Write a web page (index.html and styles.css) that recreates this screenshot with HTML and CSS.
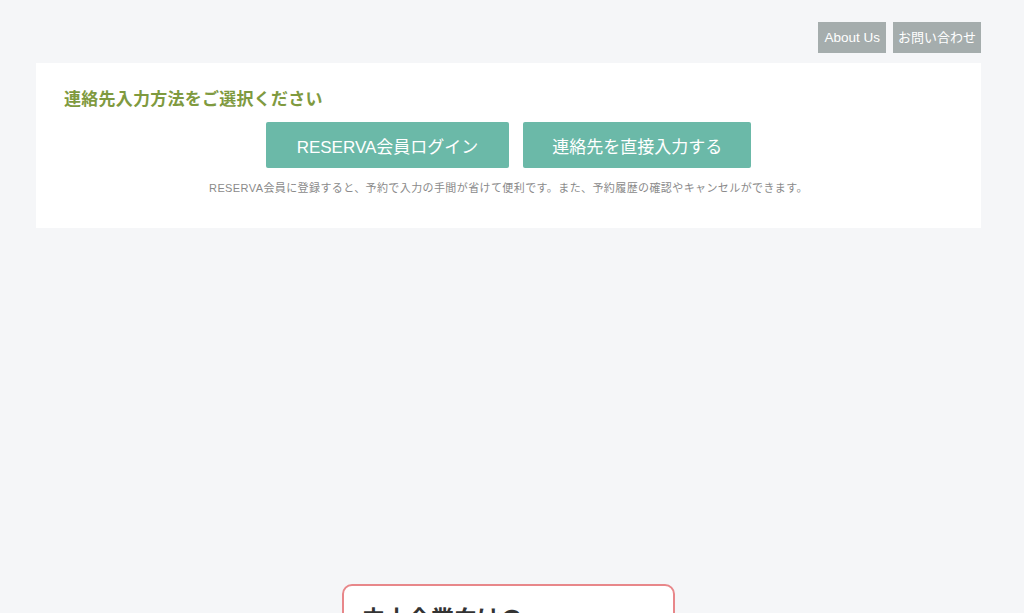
FILE: index.html
```html
<!DOCTYPE html>
<html lang="ja">
<head>
    <meta charset="UTF-8">
    <meta name="viewport" content="width=device-width, initial-scale=1.0">
    <title>連絡先入力方法</title>
    <link rel="stylesheet" href="styles.css">
</head>
<body>
    <div class="page">
        <div class="top-nav">
            <a class="nav-btn" href="#">About Us</a>
            <a class="nav-btn" href="#">お問い合わせ</a>
        </div>

        <div class="select-box">
            <h2 class="select-title">連絡先入力方法をご選択ください</h2>
            <div class="select-buttons">
                <button class="select-btn">RESERVA会員ログイン</button>
                <button class="select-btn">連絡先を直接入力する</button>
            </div>
            <p class="select-note">RESERVA会員に登録すると、予約で入力の手間が省けて便利です。また、予約履歴の確認やキャンセルができます。</p>
        </div>

        <div class="promo">
            <div class="promo-card">
                <h3 class="promo-title">中小企業向けの</h3>
            </div>
        </div>
    </div>
</body>
</html>
```

FILE: styles.css
```css
* {
    margin: 0;
    padding: 0;
    box-sizing: border-box;
}

html, body {
    font-family: "Liberation Sans", "Noto Sans CJK JP", sans-serif;
    background-color: #f5f6f8;
    height: 100%;
    overflow: hidden;
}

.page {
    width: 945px;
    margin-left: 36px;
}

.top-nav {
    display: flex;
    justify-content: flex-end;
    gap: 7px;
    padding-top: 22px;
}

.nav-btn {
    display: block;
    height: 31px;
    line-height: 31px;
    padding: 0 5px;
    font-size: 13px;
    color: #fff;
    text-decoration: none;
    background-color: #a5adad;
}

.nav-btn:first-child {
    padding: 0 6px;
    font-size: 13.5px;
}

.select-box {
    margin-top: 10px;
    height: 165px;
    background-color: #fff;
    padding: 26px 28px 0;
}

.select-title {
    font-size: 17px;
    font-weight: bold;
    letter-spacing: 0.25px;
    color: #7f9a3f;
    line-height: 22px;
}

.select-buttons {
    display: flex;
    justify-content: center;
    gap: 14px;
    margin-top: 11px;
}

.select-btn {
    height: 46px;
    padding: 0 29px;
    font-family: inherit;
    font-size: 17px;
    color: #fff;
    background-color: #6bb9a8;
    border: none;
    border-radius: 2px;
    cursor: pointer;
}

.select-btn:first-child {
    padding: 0 31px;
}

.select-note {
    margin-top: 11px;
    font-size: 11px;
    letter-spacing: 0.4px;
    color: #8a8a8a;
    text-align: center;
}

.promo {
    display: flex;
    justify-content: center;
    margin-top: 356px;
}

.promo-card {
    width: 333px;
    height: 120px;
    background-color: #fff;
    border: 2px solid #e8878a;
    border-radius: 10px;
    padding: 14px 18px;
}

.promo-title {
    font-size: 23px;
    font-weight: bold;
    color: #333;
}
```
